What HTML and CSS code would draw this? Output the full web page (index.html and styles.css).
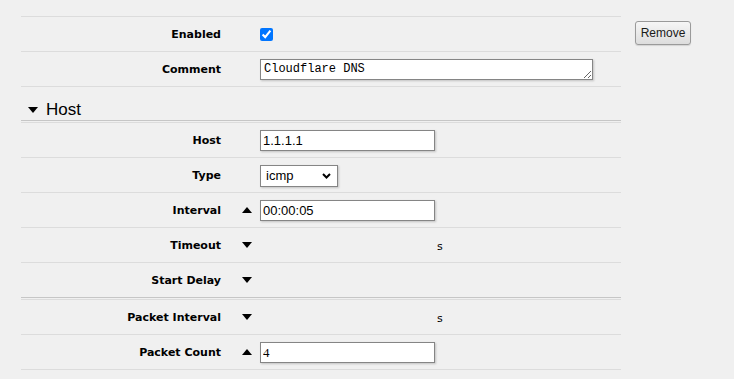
FILE: index.html
```html
<!DOCTYPE html>
<html lang="en">
<head>
  <meta charset="UTF-8" />
  <title>Netwatch</title>
  <link rel="stylesheet" href="styles.css">
</head>
<body>
  <div class="page">
    <div class="form">
      <div class="row">
        <label class="label" for="enabled">Enabled</label>
        <span></span>
        <div class="field"><input id="enabled" class="check" type="checkbox" checked></div>
      </div>
      <div class="row">
        <label class="label" for="comment">Comment</label>
        <span></span>
        <div class="field"><textarea id="comment" class="comment" rows="1">Cloudflare DNS</textarea></div>
      </div>

      <div class="section-head"><span class="caret down"></span>Host</div>

      <div class="group">
        <div class="row">
          <label class="label" for="host">Host</label>
          <span></span>
          <div class="field"><input id="host" class="text" type="text" value="1.1.1.1"></div>
        </div>
        <div class="row">
          <label class="label" for="type">Type</label>
          <span></span>
          <div class="field">
            <div class="select">
              <select id="type">
                <option>icmp</option>
                <option>tcp-conn</option>
                <option>http-get</option>
              </select>
              <svg class="chevron" width="9" height="6" viewBox="0 0 9 6"><polyline points="1,1 4.5,4.5 8,1" fill="none" stroke="#000" stroke-width="2"/></svg>
            </div>
          </div>
        </div>
        <div class="row">
          <label class="label" for="interval">Interval</label>
          <span class="caret up"></span>
          <div class="field"><input id="interval" class="text" type="text" value="00:00:05"></div>
        </div>
        <div class="row">
          <label class="label">Timeout</label>
          <span class="caret down"></span>
          <div class="field"><span class="unit">s</span></div>
        </div>
        <div class="row">
          <label class="label">Start Delay</label>
          <span class="caret down"></span>
          <div class="field"></div>
        </div>
      </div>

      <div class="group last">
        <div class="row">
          <label class="label">Packet Interval</label>
          <span class="caret down"></span>
          <div class="field"><span class="unit">s</span></div>
        </div>
        <div class="row">
          <label class="label" for="count">Packet Count</label>
          <span class="caret up"></span>
          <div class="field"><input id="count" class="text serif" type="text" value="4"></div>
        </div>
      </div>
    </div>

    <div class="actions">
      <button class="btn" type="button">Remove</button>
    </div>
  </div>
</body>
</html>
```

FILE: styles.css
```css
html, body {
  margin: 0;
  background: #f0f0f0;
  font-family: "DejaVu Sans", Verdana, sans-serif;
  color: #000;
}
.page {
  display: flex;
  align-items: flex-start;
  padding: 16px 0 0 21px;
}
.form {
  width: 600px;
}
.row {
  display: grid;
  grid-template-columns: 200px 39px 1fr;
  align-items: center;
  height: 34px;
  border-top: 1px solid #dcdcdc;
}
.label {
  text-align: right;
  padding-top: 1px;
  font-size: 11px;
  font-weight: bold;
}
.field {
  display: flex;
  align-items: center;
}
.section-head {
  display: flex;
  align-items: center;
  box-sizing: border-box;
  height: 35px;
  padding: 12px 0 0 7px;
  border-top: 1px solid #dcdcdc;
  border-bottom: 1px solid #c6c6c6;
  margin-bottom: 1px;
  font-family: "Liberation Sans", Arial, sans-serif;
  font-size: 17px;
}
.section-head .caret {
  margin: 0 8px 0 0;
  border-left-width: 5.5px;
  border-right-width: 5.5px;
  border-top-width: 5px;
}
.group {
  border-bottom: 1px solid #c6c6c6;
  margin-bottom: 1px;
}
.group.last {
  border-bottom: 1px solid #dcdcdc;
}
.caret {
  width: 0;
  height: 0;
  margin-left: 21px;
  border-left: 5px solid transparent;
  border-right: 5px solid transparent;
}
.caret.down {
  border-top: 6px solid #000;
}
.caret.up {
  border-bottom: 6px solid #000;
}
.check {
  width: 13px;
  height: 13px;
  margin: 1px 0 0 0;
}
.comment {
  display: block;
  box-sizing: border-box;
  width: 333px;
  height: 21px;
  margin: 1px 0 0 0;
  padding: 2px 3px;
  border: 1px solid #858585;
  box-shadow: 1px 1px 2px rgba(0,0,0,0.2);
  font-family: "Liberation Mono", "DejaVu Sans Mono", monospace;
  font-size: 12px;
  line-height: 14px;
  background: #fff;
  color: #000;
}
.text {
  box-sizing: border-box;
  width: 175px;
  height: 21px;
  margin: 1px 0 0 0;
  padding: 0 2px;
  border: 1px solid #858585;
  box-shadow: 1px 1px 2px rgba(0,0,0,0.2);
  font-family: "Liberation Sans", Arial, sans-serif;
  font-size: 13px;
  background: #fff;
  color: #000;
  outline: none;
}
.text.serif {
  font-family: "Liberation Serif", "Times New Roman", serif;
}
.select {
  position: relative;
  display: inline-block;
}
.select select {
  appearance: none;
  box-sizing: border-box;
  width: 78px;
  height: 22px;
  margin: 1px 0 0 0;
  padding: 0 0 0 5px;
  border: 1px solid #858585;
  border-radius: 0;
  box-shadow: 1px 1px 2px rgba(0,0,0,0.2);
  background: #fff;
  font-family: "Liberation Sans", Arial, sans-serif;
  font-size: 13px;
  color: #000;
  display: block;
}
.chevron {
  position: absolute;
  top: 9px;
  right: 7px;
  pointer-events: none;
}
.unit {
  padding-left: 177px;
  padding-top: 3px;
  font-size: 11px;
}
.actions {
  margin: 5px 0 0 14px;
}
.btn {
  width: 56px;
  height: 24px;
  padding: 0;
  border: 1px solid #9a9a9a;
  border-radius: 3px;
  background: linear-gradient(#f6f6f6, #dddddd);
  box-shadow: 0 1px 1px rgba(0,0,0,0.12);
  font-family: "Liberation Sans", Arial, sans-serif;
  font-size: 12px;
  color: #1a1a1a;
  cursor: pointer;
}
```
